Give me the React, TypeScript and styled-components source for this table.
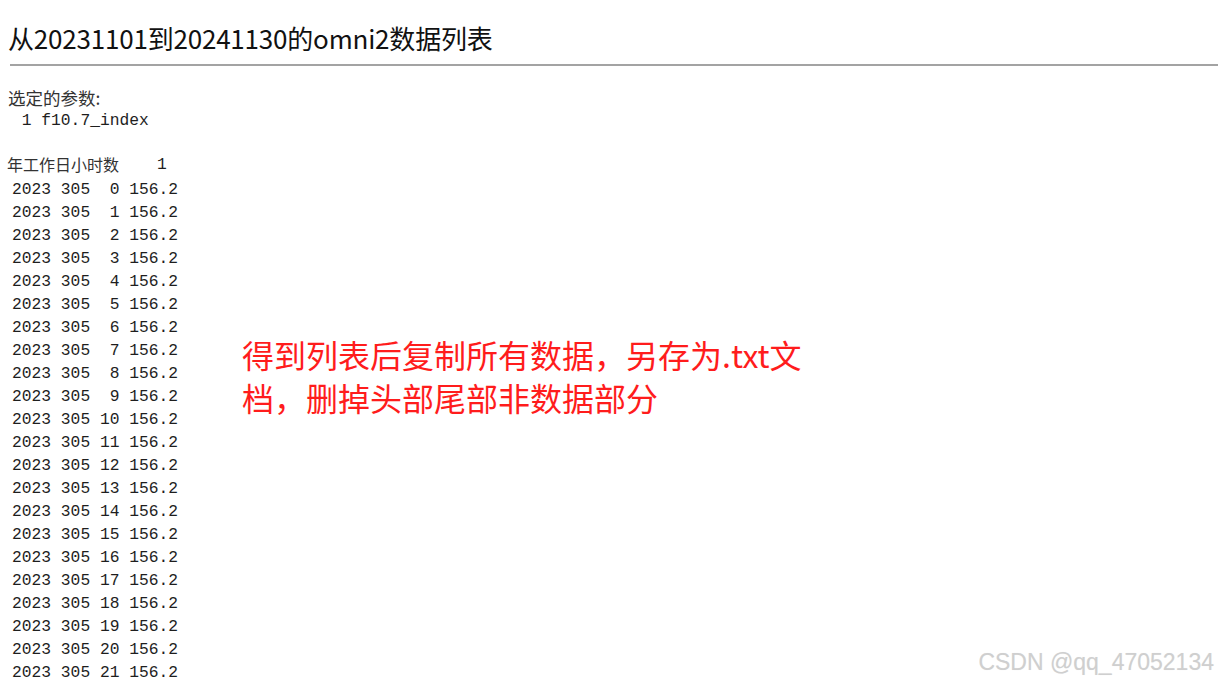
import React from 'react'
import styled, { createGlobalStyle } from 'styled-components'

const GlobalStyle = createGlobalStyle`
  html, body {
    margin: 0;
    padding: 0;
    background: #ffffff;
    overflow: hidden;
  }
  body {
    padding-left: 8px;
    font-family: "Noto Sans CJK SC", "Noto Sans", sans-serif;
    color: #1a1a1a;
  }
`

const rows = Array.from({ length: 22 }, (_, h) => ({
  year: 2023,
  day: 305,
  hour: h,
  value: '156.2',
}))

const fmtRow = (r: (typeof rows)[number]) => `${r.year} ${r.day} ${String(r.hour).padStart(2, ' ')} ${r.value}`

const App: React.FC = () => {
  return (
    <>
      <GlobalStyle />
      <Page>
        <Title>从20231101到20241130的omni2数据列表</Title>
        <Rule />
        <Label>选定的参数:</Label>
        <Mono> 1 f10.7_index</Mono>

        <HeaderRow>
          <HeaderLabel>年工作日小时数</HeaderLabel>
          <HeaderIndex>1</HeaderIndex>
        </HeaderRow>

        <Body>
          <DataBlock>
            {rows.map((r) => (
              <Mono key={r.hour}>{fmtRow(r)}</Mono>
            ))}
          </DataBlock>
          <Note>
            得到列表后复制所有数据，另存为.txt文
            <br />
            档，删掉头部尾部非数据部分
          </Note>
        </Body>
      </Page>
      <Watermark>CSDN @qq_47052134</Watermark>
    </>
  )
}

export default App

const Page = styled.div`
  display: flex;
  flex-direction: column;
  height: 681px;
`

const Title = styled.h2`
  margin: 22px 0 0 0;
  font-size: 26px;
  line-height: 32px;
  font-weight: 400;
  color: #111;
  letter-spacing: -0.2px;
`

const Rule = styled.div`
  margin: 10px 0 0 2px;
  border-top: 2px solid #a3a3a3;
`

const Label = styled.div`
  margin-top: 20px;
  font-size: 17.5px;
  line-height: 23px;
  color: #333;
`

const Mono = styled.div`
  font-family: "Liberation Mono", "Courier New", monospace;
  font-size: 16.3px;
  line-height: 23px;
  white-space: pre;
  padding-left: 4px;
  color: #1e1e1e;
`

const HeaderRow = styled.div`
  display: flex;
  align-items: center;
  margin-top: 21px;
  height: 23px;
`

const HeaderLabel = styled.span`
  font-size: 16px;
  line-height: 23px;
  color: #333;
  margin-left: -1px;
`

const HeaderIndex = styled.span`
  font-family: "Liberation Mono", "Courier New", monospace;
  font-size: 16.3px;
  line-height: 23px;
  margin-left: 38px;
  color: #1e1e1e;
`

const Body = styled.div`
  display: flex;
  align-items: flex-start;
  margin-top: 2px;
`

const DataBlock = styled.div`
  display: flex;
  flex-direction: column;
  width: 234px;
  flex-shrink: 0;
`

const Note = styled.div`
  margin-top: 155px;
  font-size: 32px;
  line-height: 43px;
  color: #ff1c1c;
  white-space: nowrap;
`

const Watermark = styled.div`
  position: absolute;
  right: 4px;
  bottom: 6px;
  font-family: "Liberation Sans", Arial, sans-serif;
  font-size: 23px;
  line-height: 26px;
  color: #cfcfcf;
  text-shadow: 0 0 1px rgba(0, 0, 0, 0.08);
`
